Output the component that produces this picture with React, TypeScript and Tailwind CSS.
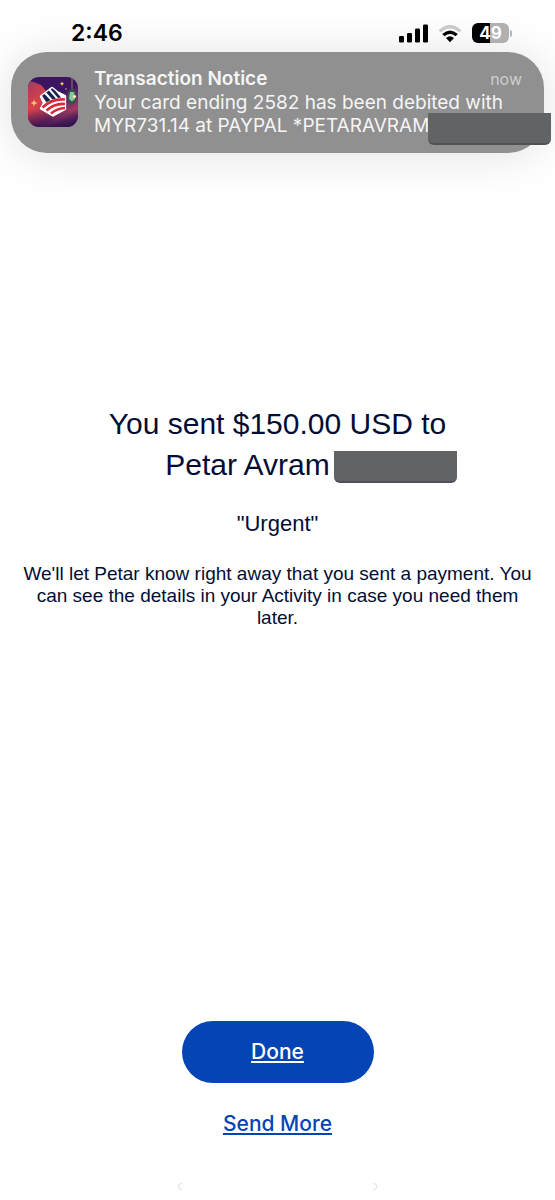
import React from "react";

function SignalIcon() {
  return (
    <svg width="29" height="19" viewBox="0 0 29 19" aria-label="Signal" role="img">
      <rect x="0" y="12" width="5" height="6.5" rx="1.3" />
      <rect x="8" y="9" width="5" height="9.5" rx="1.3" />
      <rect x="16" y="4.5" width="5" height="14" rx="1.3" />
      <rect x="24" y="0.5" width="5" height="18" rx="1.3" />
    </svg>
  );
}

function WifiIcon() {
  return (
    <svg width="24" height="19" viewBox="0 0 24 19" aria-label="Wi-Fi" role="img">
      <path d="M0.5 6.2 Q12 -4.4 23.5 6.2 L21.2 8.6 Q12 0.4 2.8 8.6 Z" fill="#c9c9c9" />
      <path d="M4.2 10 Q12 2.8 19.8 10 L17.5 12.3 Q12 7.6 6.5 12.3 Z" />
      <path d="M8 14 Q12 10.6 16 14 L12 18.2 Z" />
    </svg>
  );
}

function Battery() {
  return (
    <div className="flex items-center gap-px" role="img" aria-label="Battery 49 percent">
      <div className="flex h-5 w-[37px] items-center justify-center rounded-md bg-linear-to-r from-black from-50% to-[#b0b0b0] to-50% text-[17px] leading-5 font-bold text-white">
        49
      </div>
      <div className="h-[7px] w-[2px] rounded-r-full bg-[#b5b5b5]" />
    </div>
  );
}

function BankIcon() {
  return (
    <svg className="size-[50px] shrink-0" viewBox="0 0 50 50" role="img" aria-label="Bank app">
      <defs>
        <clipPath id="tile">
          <rect width="50" height="50" rx="11" />
        </clipPath>
        <linearGradient id="night" x1="0.3" y1="0" x2="0.9" y2="1">
          <stop offset="0" stopColor="#3c1560" />
          <stop offset="0.4" stopColor="#3b1560" />
          <stop offset="0.75" stopColor="#a03c62" />
          <stop offset="1" stopColor="#3a1458" />
        </linearGradient>
        <linearGradient id="glow" x1="0" y1="0" x2="0.6" y2="1">
          <stop offset="0" stopColor="#a03a5e" />
          <stop offset="0.5" stopColor="#d8434a" />
          <stop offset="1" stopColor="#8a2c58" />
        </linearGradient>
        <linearGradient id="foot" x1="0" y1="0" x2="0" y2="1">
          <stop offset="0.65" stopColor="#2a0f50" stopOpacity="0" />
          <stop offset="1" stopColor="#2a0f50" stopOpacity="0.85" />
        </linearGradient>
      </defs>
      <g clipPath="url(#tile)">
        <rect width="50" height="50" fill="url(#night)" />
        <path d="M0 4 Q14 5 19 16 Q30 26 25 37 Q18 45 7 48 L0 50 Z" fill="url(#glow)" />
        <rect width="50" height="50" fill="url(#foot)" />
        <path
          d="M13 19.500 L24 11 L29 15 L37 19 L37 32 L25 38.500 L13 31.500 L16 26 Z"
          fill="#fff"
          stroke="#fff"
          strokeWidth="2.4"
          strokeLinejoin="round"
        />
        <g fill="#17214e">
          <path d="M14 18.800 L16.500 16.900 L22.500 23.300 L18.300 25.300 Z" />
          <path d="M18.300 15.500 L20.800 13.500 L28 21.500 L24.500 22.500 Z" />
          <path d="M22.600 12.200 L24.300 11.300 L27.500 14 L33 20.500 L30 21 Z" />
        </g>
        <g fill="none" stroke="#d62c39" strokeWidth="2.7">
          <path d="M14.500 30.500 Q24 21.500 37 22.500" />
          <path d="M18.500 33.500 Q27 26 37 27" />
          <path d="M23 36.500 Q29 31.500 37 31" />
        </g>
        <path d="M44 0 V14" stroke="#b6975c" strokeWidth="0.8" />
        <path d="M44 11 L48 15 L48.5 22 L46 27 H42 L39.5 22 L40 15 Z" fill="#345448" />
        <path d="M42 15 H46 L47 22 L44 24.5 L41 22 Z" fill="#8bc3a0" />
        <circle cx="46.5" cy="19.5" r="1.6" fill="#fff0b5" />
        <g fill="#ffc36b">
          <path d="M6 22.5 L7 25 L9.5 26 L7 27 L6 29.5 L5 27 L2.5 26 L5 25 Z" />
          <path d="M34 4.5 L34.7 6 L36.2 6.7 L34.7 7.4 L34 8.9 L33.3 7.4 L31.8 6.7 L33.3 6 Z" />
          <circle cx="38" cy="12" r="0.7" />
        </g>
      </g>
    </svg>
  );
}

const barStyle = "absolute h-8 w-[123px] rounded-b-md border-b-2 border-[#505157] bg-[#626365]";

export default function App() {
  return (
    <div className="flex min-h-screen flex-col overflow-hidden bg-white font-['Inter','Liberation_Sans',sans-serif] text-[#020d35]">
      <header className="relative z-10 flex h-[52px] items-end justify-between pr-[43px] pb-[3px] pl-[71px] text-black">
        <time className="text-[23px] leading-8 font-semibold">2:46</time>
        <div className="flex h-8 items-center gap-[10px]">
          <SignalIcon />
          <WifiIcon />
          <Battery />
        </div>
      </header>

      <section className="relative mx-[11px] flex items-center gap-4 rounded-[36px] bg-[#909090] pt-[15px] pr-[22px] pb-4 pl-[17px] text-white shadow-[0_2px_48px_rgba(0,0,0,0.12)]">
        <BankIcon />
        <div className="min-w-0 flex-1">
          <div className="flex items-center justify-between leading-6">
            <h2 className="text-[19px] font-semibold text-[#f5f5f5]">Transaction Notice</h2>
            <span className="text-base text-[#cecece]">now</span>
          </div>
          <p className="text-[19px] leading-[23px] text-[#f5f5f5]">
            Your card ending 2582 has been debited with
            <br />
            MYR731.14 at PAYPAL *PETARAVRAM
          </p>
        </div>
        <div className={`${barStyle} -right-[7px] bottom-2`} />
      </section>

      <main className="flex flex-1 flex-col items-center px-5 pt-[250px] text-center font-['Liberation_Sans',sans-serif]">
        <h1 className="text-[30px] leading-[41px]">
          You sent $150.00 USD to
          <br />
          <span className="relative inline-block pr-[60px]">
            Petar Avram
            <span className={`${barStyle} -right-[67px] bottom-[2px]`} />
          </span>
        </h1>
        <p className="mt-[25px] text-[22px] leading-7">"Urgent"</p>
        <p className="mt-[25px] text-[19px] leading-[22px]">
          We'll let Petar know right away that you sent a payment. You can see the details in your Activity in case you need them later.
        </p>
      </main>

      <footer className="flex flex-col items-center">
        <button className="h-[62px] w-48 rounded-full bg-[#0544b5] text-[21px] font-medium text-white underline underline-offset-2">
          Done
        </button>
        <a href="#send-more" className="mt-[27px] text-[21px] leading-7 font-medium text-[#0544b5] underline underline-offset-2">
          Send More
        </a>
        <div className="mt-[45px] mb-[10px] flex h-[7px] w-[199px] justify-between">
          <span className="w-1 rounded-l-full border border-r-0 border-[#e2e2e2]" />
          <span className="w-1 rounded-r-full border border-l-0 border-[#e2e2e2]" />
        </div>
      </footer>
    </div>
  );
}
